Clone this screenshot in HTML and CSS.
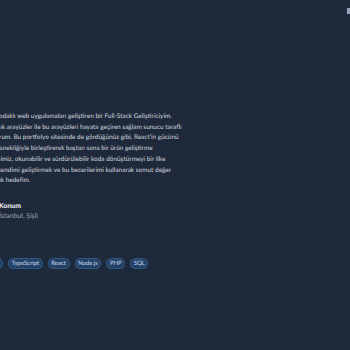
FILE: index.html
```html
<!DOCTYPE html>
<html lang="tr">
<head>
  <meta charset="UTF-8" />
  <meta name="viewport" content="width=device-width, initial-scale=1.0"/>
  <title>Hakkımda</title>
  <link rel="stylesheet" href="styles.css">
</head>
<body>
  <span class="corner-dot"></span>
  <section class="about">
    <p class="bio">
      Kullanıcı odaklı web uygulamaları geliştiren bir Full-Stack Geliştiriciyim.<br>
      Modern şık arayüzler ile bu arayüzleri hayata geçiren sağlam sunucu taraflı<br>
      yürütüyorum. Bu portfolyo sitesinde de gördüğünüz gibi, React'in gücünü<br>
      Node.js esnekliğiyle birleştirerek baştan sona bir ürün geliştirme<br>
      Çözümlerimiz, okunabilir ve sürdürülebilir koda dönüştürmeyi bir ilke<br>
      Her gün kendimi geliştirmek ve bu becerilerimi kullanarak somut değer<br>
      katabilmek hedefim.
    </p>
    <div class="location">
      <span class="loc-title">Konum</span>
      <span class="loc-text">İstanbul, Şişli</span>
    </div>
    <div class="skills">
      <span class="chip">JavaScript</span>
      <span class="chip">TypeScript</span>
      <span class="chip">React</span>
      <span class="chip">Node.js</span>
      <span class="chip">PHP</span>
      <span class="chip">SQL</span>
    </div>
  </section>
</body>
</html>
```

FILE: styles.css
```css
body {
  margin: 0;
  padding: 0;
  background: #1e293b;
  font-family: Lato, sans-serif;
  color: #d1d5db;
  height: 350px;
  overflow: hidden;
  text-rendering: geometricPrecision;
}
.corner-dot {
  position: absolute;
  top: 8px;
  right: 0;
  width: 3px;
  height: 6px;
  background: #94a3b8;
}
.about {
  padding-top: 112px;
  margin-left: -26.5px;
}
.bio {
  margin: 0;
  font-size: 6.45px;
  line-height: 10.7px;
  white-space: nowrap;
}
.location {
  display: flex;
  flex-direction: column;
  margin-top: 14px;
  margin-left: 25.5px;
  font-size: 6.9px;
  line-height: 10px;
}
.loc-title {
  color: #ffffff;
  font-weight: bold;
}
.loc-text {
  color: #9ca3af;
}
.skills {
  display: flex;
  gap: 5px;
  margin-top: 37px;
  margin-left: -4px;
}
.chip {
  background: rgba(56, 140, 225, 0.25);
  border: 1px solid rgba(96, 165, 250, 0.22);
  color: #c4dcfa;
  font-size: 6px;
  line-height: 9px;
  padding: 0 2.5px;
  border-radius: 6px;
}
```
